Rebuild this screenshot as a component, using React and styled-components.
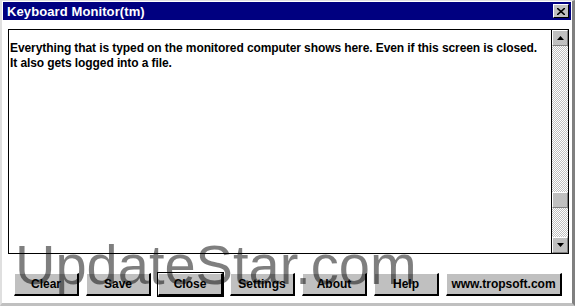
import styled, { createGlobalStyle } from "styled-components";

const Global = createGlobalStyle`
  html, body { margin: 0; padding: 0; background: #ffffff; }
  body { font-family: "Liberation Sans", Arial, sans-serif; }
`;

const Frame = styled.div`
  position: relative;
  width: 575px;
  height: 306px;
  box-sizing: border-box;
  border-left: 2px solid #dfdfdf;
  border-top: 1px solid #dfdfdf;
  border-right: 3px solid #808080;
  border-bottom: 3px solid #c0c0c0;
  background: #ffffff;
  display: flex;
  flex-direction: column;
  overflow: hidden;
`;

const TitleBar = styled.div`
  height: 18px;
  margin: 1px 1px 0 1px;
  background: #000080;
  display: flex;
  align-items: center;
  justify-content: space-between;
  padding: 0 2px 0 4px;
`;

const Title = styled.span`
  color: #ffffff;
  font-weight: bold;
  font-size: 13px;
  letter-spacing: 0.1px;
`;

const XButton = styled.div`
  width: 14px;
  height: 12px;
  background: #c0c0c0;
  border-top: 1px solid #ffffff;
  border-left: 1px solid #ffffff;
  border-right: 1px solid #000000;
  border-bottom: 1px solid #000000;
  display: flex;
  align-items: center;
  justify-content: center;
`;

const Body = styled.div`
  flex: 1;
  display: flex;
  flex-direction: column;
  padding: 9px 3px 0 6px;
`;

const TextArea = styled.div`
  height: 223px;
  border: 1px solid #000000;
  display: flex;
  background: #ffffff;
`;

const Text = styled.div`
  flex: 1;
  padding: 11px 0 0 1px;
  font-weight: bold;
  font-size: 12px;
  line-height: 15px;
  letter-spacing: -0.09px;
  color: #000000;
`;

const ScrollBar = styled.div`
  width: 16px;
  display: flex;
  flex-direction: column;
  background-color: #ffffff;
  background-image: repeating-conic-gradient(#c0c0c0 0 25%, #ffffff 0 50%);
  background-size: 2px 2px;
  border-left: 1px solid #000000;
`;

const Arrow = styled.div`
  height: 14px;
  background: #c0c0c0;
  border-top: 1px solid #ffffff;
  border-left: 1px solid #ffffff;
  border-right: 1px solid #808080;
  border-bottom: 1px solid #808080;
  display: flex;
  align-items: center;
  justify-content: center;
`;

const Track = styled.div`
  flex: 1;
  display: flex;
  flex-direction: column;
  justify-content: flex-end;
`;

const Thumb = styled.div`
  height: 14px;
  margin-bottom: 29px;
  background: #c0c0c0;
  border-top: 1px solid #ffffff;
  border-left: 1px solid #ffffff;
  border-right: 1px solid #808080;
  border-bottom: 1px solid #808080;
`;

const ButtonRow = styled.div`
  display: flex;
  gap: 7px;
  padding: 19px 0 0 6px;
`;

const Button = styled.div`
  box-sizing: border-box;
  width: ${(p) => p.w || 65}px;
  height: 23px;
  background: #c0c0c0;
  border-top: 1px solid #ffffff;
  border-left: 1px solid #ffffff;
  border-right: 2px solid #000000;
  border-bottom: 2px solid #000000;
  outline: ${(p) => (p.focused ? "1px solid #000000" : "none")};
  display: flex;
  align-items: center;
  justify-content: center;
  font-weight: bold;
  font-size: 12px;
  color: #000000;
`;

const Watermark = styled.div`
  position: absolute;
  left: 13px;
  top: 236px;
  font-family: "Liberation Sans", Arial, sans-serif;
  font-size: 56px;
  line-height: 56px;
  color: rgba(0, 0, 0, 0.5);
  pointer-events: none;
  white-space: nowrap;
`;

function Tri({ up }) {
  return (
    <svg width="7" height="4" viewBox="0 0 7 4">
      <polygon points={up ? "3.5,0 7,4 0,4" : "0,0 7,0 3.5,4"} fill="#000" />
    </svg>
  );
}

const buttons = [
  { label: "Clear" },
  { label: "Save" },
  { label: "Close", focused: true },
  { label: "Settings" },
  { label: "About" },
  { label: "Help" },
  { label: "www.tropsoft.com", w: 116 },
];

export default function App() {
  return (
    <>
      <Global />
      <Frame>
        <TitleBar>
          <Title>Keyboard Monitor(tm)</Title>
          <XButton>
            <svg width="8" height="7" viewBox="0 0 8 7">
              <path d="M0 0 L8 7 M8 0 L0 7" stroke="#000" strokeWidth="1.6" />
            </svg>
          </XButton>
        </TitleBar>
        <Body>
          <TextArea>
            <Text>
              Everything that is typed on the monitored computer shows here. Even if this screen is closed.
              <br />
              It also gets logged into a file.
            </Text>
            <ScrollBar>
              <Arrow>
                <Tri up />
              </Arrow>
              <Track>
                <Thumb />
              </Track>
              <Arrow>
                <Tri />
              </Arrow>
            </ScrollBar>
          </TextArea>
          <ButtonRow>
            {buttons.map((b) => (
              <Button key={b.label} w={b.w} focused={b.focused}>
                {b.label}
              </Button>
            ))}
          </ButtonRow>
        </Body>
        <Watermark>UpdateStar.com</Watermark>
      </Frame>
    </>
  );
}
